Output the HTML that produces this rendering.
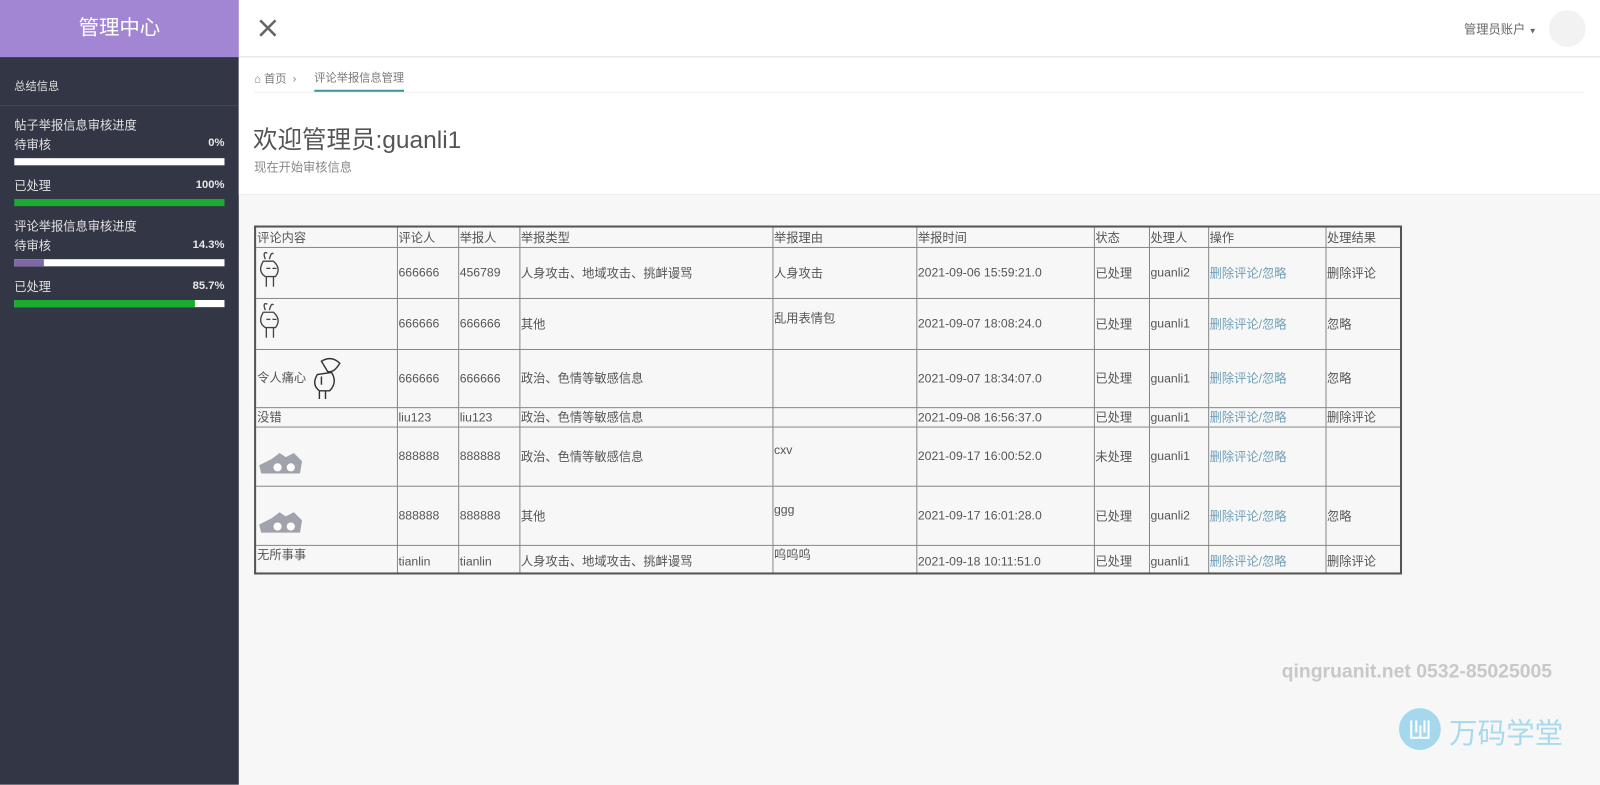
<!DOCTYPE html>
<html><head><meta charset="utf-8"><style>
*{margin:0;padding:0;box-sizing:border-box}
body{width:1600px;height:769px;overflow:hidden;background:#f7f7f7;font-family:"Liberation Sans","Noto Sans CJK SC",sans-serif;color:#555}
#w{position:absolute;left:0;top:0;width:1568px;height:754px;transform:scale(1.0204);transform-origin:0 0}
.side{position:absolute;left:0;top:0;width:234px;height:769px;background:#333645}
.logo{height:56px;background:#a386d3;color:#fff;font-size:20px;text-align:center;line-height:56px}
.s{position:absolute;left:14px;font-size:12px;color:#e0e0e0}
.r{position:absolute;right:14px;font-size:11px;color:#e8e8e8;font-weight:bold}
.bar{position:absolute;left:14px;width:206px;height:7px;background:#fff}
.bar i{display:block;height:100%}
.top{position:absolute;left:234px;top:0;right:0;height:56px;background:#fff;border-bottom:1px solid #e6e6e6}
.hd{position:absolute;left:234px;top:57px;right:0;height:134px;background:#fff;border-bottom:1px solid #eee}
table{position:absolute;left:249px;top:221px;border-collapse:collapse;border:2px solid #555;font-size:12px;color:#555}
td{border:1px solid #888;padding:0 1px;vertical-align:middle;white-space:nowrap}
td.t{vertical-align:top}
a{color:#6fa0b8;text-decoration:none}
</style></head><body><div id="w">
<div class="side">
<div class="logo">管理中心</div>
<div class="s" style="top:76px;font-size:11px">总结信息</div>
<div style="position:absolute;left:0;right:0;top:103px;border-top:1px solid #444858"></div>
<div class="s" style="top:114px">帖子举报信息审核进度</div>
<div class="s" style="top:133px">待审核</div><div class="r" style="top:134px">0%</div>
<div class="bar" style="top:155px"></div>
<div class="s" style="top:173px">已处理</div><div class="r" style="top:175px">100%</div>
<div class="bar" style="top:195px"><i style="width:100%;background:#1bab2e"></i></div>
<div class="s" style="top:213px">评论举报信息审核进度</div>
<div class="s" style="top:232px">待审核</div><div class="r" style="top:234px">14.3%</div>
<div class="bar" style="top:254px"><i style="width:14.3%;background:#7f68a8"></i></div>
<div class="s" style="top:272px">已处理</div><div class="r" style="top:274px">85.7%</div>
<div class="bar" style="top:294px"><i style="width:85.7%;background:#1bab2e"></i></div>
</div>
<div class="top">
<svg style="position:absolute;left:20px;top:19px" width="17" height="17"><path d="M1 1L16 16M16 1L1 16" stroke="#666" stroke-width="2.5"/></svg>
<div style="position:absolute;right:62px;top:20px;font-size:12px;color:#666">管理员账户 <span style="font-size:8px">▼</span></div>
<div style="position:absolute;right:14px;top:10px;width:36px;height:36px;border-radius:50%;background:#f2f2f2"></div>
</div>
<div class="hd">
<div style="position:absolute;left:15px;top:12px;font-size:11px;color:#777">⌂ 首页 &nbsp;<span style="color:#888">›</span></div>
<div style="position:absolute;left:74px;top:11px;font-size:11px;color:#777;border-bottom:2px solid #3a8f9a;padding-bottom:4px">评论举报信息管理</div>
<div style="position:absolute;left:15px;right:15px;top:33px;border-top:1px solid #eee"></div>
<div style="position:absolute;left:14px;top:60px;font-size:24px;color:#555">欢迎管理员:guanli1</div>
<div style="position:absolute;left:15px;top:98px;font-size:12px;color:#888">现在开始审核信息</div>
</div>
<table>
<colgroup><col style="width:139px"><col style="width:60px"><col style="width:60px"><col style="width:248px"><col style="width:141px"><col style="width:174px"><col style="width:54px"><col style="width:58px"><col style="width:115px"><col style="width:74px"></colgroup>
<tr style="height:20px"><td>评论内容</td><td>评论人</td><td>举报人</td><td>举报类型</td><td>举报理由</td><td>举报时间</td><td>状态</td><td>处理人</td><td>操作</td><td>处理结果</td></tr>
<tr style="height:50px"><td><svg width="28" height="40"><path d="M8 8q-3-8 2-6M12 8q2-8 4-5M6 10q-6 10 2 15h10q6-8-2-15zM9 17h4M15 17h4M9 25v10M16 25v10" fill="none" stroke="#444" stroke-width="1.3"/></svg></td><td>666666</td><td>456789</td><td>人身攻击、地域攻击、挑衅谩骂</td><td>人身攻击</td><td>2021-09-06 15:59:21.0</td><td>已处理</td><td>guanli2</td><td><a>删除评论/忽略</a></td><td>删除评论</td></tr>
<tr style="height:50px"><td><svg width="28" height="40"><path d="M8 8q-3-8 2-6M12 8q2-8 4-5M6 10q-6 10 2 15h10q6-8-2-15zM9 17h4M15 17h4M9 25v10M16 25v10" fill="none" stroke="#444" stroke-width="1.3"/></svg></td><td>666666</td><td>666666</td><td>其他</td><td class="t" style="padding-top:10px">乱用表情包</td><td>2021-09-07 18:08:24.0</td><td>已处理</td><td>guanli1</td><td><a>删除评论/忽略</a></td><td>忽略</td></tr>
<tr style="height:57px"><td>令人痛心 <svg width="36" height="44" style="vertical-align:middle"><path d="M8 18q-6 10 2 16h10q8-8 2-18zM12 5q10-6 18 2q-6 10-12 8zM10 34v8M16 34v8M12 20v8" fill="none" stroke="#333" stroke-width="1.4"/></svg></td><td>666666</td><td>666666</td><td>政治、色情等敏感信息</td><td></td><td>2021-09-07 18:34:07.0</td><td>已处理</td><td>guanli1</td><td><a>删除评论/忽略</a></td><td>忽略</td></tr>
<tr style="height:19px"><td>没错</td><td>liu123</td><td>liu123</td><td>政治、色情等敏感信息</td><td></td><td>2021-09-08 16:56:37.0</td><td>已处理</td><td>guanli1</td><td><a>删除评论/忽略</a></td><td>删除评论</td></tr>
<tr style="height:58px"><td style="padding-top:14px"><svg width="48" height="26"><path d="M2 16l12-6 8-6 6 4 8-4 8 8-2 12H4z" fill="#a0a3ab"/><circle cx="20" cy="18" r="4" fill="#fff"/><circle cx="33" cy="18" r="4" fill="#fff"/></svg></td><td>888888</td><td>888888</td><td>政治、色情等敏感信息</td><td class="t" style="padding-top:15px">cxv</td><td>2021-09-17 16:00:52.0</td><td>未处理</td><td>guanli1</td><td><a>删除评论/忽略</a></td><td></td></tr>
<tr style="height:58px"><td style="padding-top:14px"><svg width="48" height="26"><path d="M2 16l12-6 8-6 6 4 8-4 8 8-2 12H4z" fill="#a0a3ab"/><circle cx="20" cy="18" r="4" fill="#fff"/><circle cx="33" cy="18" r="4" fill="#fff"/></svg></td><td>888888</td><td>888888</td><td>其他</td><td class="t" style="padding-top:15px">ggg</td><td>2021-09-17 16:01:28.0</td><td>已处理</td><td>guanli2</td><td><a>删除评论/忽略</a></td><td>忽略</td></tr>
<tr style="height:28px"><td class="t">无所事事</td><td style="padding-top:4px">tianlin</td><td style="padding-top:4px">tianlin</td><td style="padding-top:4px">人身攻击、地域攻击、挑衅谩骂</td><td class="t">呜呜呜</td><td style="padding-top:4px">2021-09-18 10:11:51.0</td><td style="padding-top:4px">已处理</td><td style="padding-top:4px">guanli1</td><td style="padding-top:4px"><a>删除评论/忽略</a></td><td style="padding-top:4px">删除评论</td></tr>
</table>
<div style="position:absolute;left:1256px;top:648px;font-size:19px;font-weight:bold;color:#c8c8c8">qingruanit.net 0532-85025005</div>
<div style="position:absolute;left:1371px;top:694px;width:41px;height:41px;border-radius:50%;background:#a5d8ec"><svg width="41" height="41"><path d="M12 12v17h17V12M17 12v12M21 29V17M25 12v12" fill="none" stroke="#fff" stroke-width="2"/></svg></div>
<div style="position:absolute;left:1420px;top:697px;font-size:28px;color:#a8d9ed">万码学堂</div>
</div></body></html>
